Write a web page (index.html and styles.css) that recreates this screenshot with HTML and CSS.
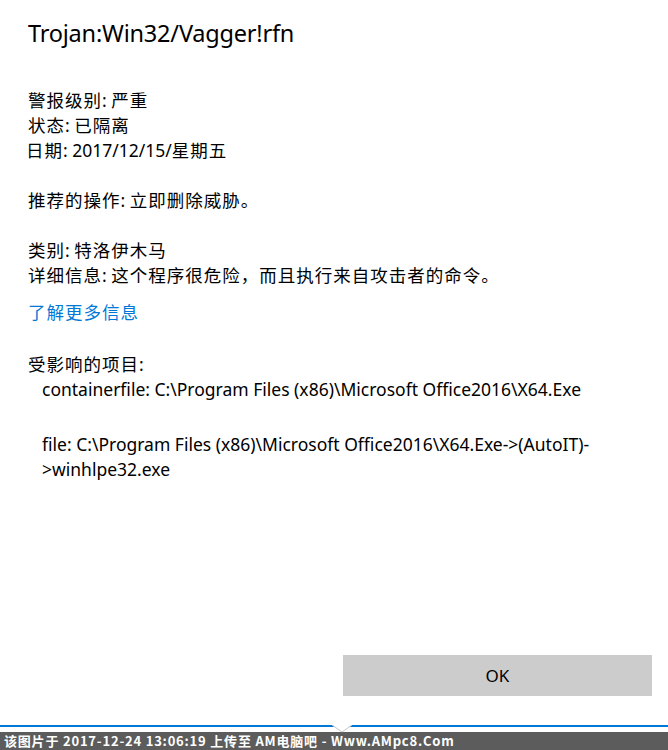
FILE: index.html
```html
<!DOCTYPE html>
<html lang="zh-CN">
<head>
<meta charset="utf-8">
<title>Windows Defender</title>
<link rel="stylesheet" href="styles.css">
</head>
<body>
<div class="page">
  <main class="dialog">
    <h1 class="title">Trojan:Win32/Vagger!rfn</h1>
    <div class="block meta">
      <p class="line"><span class="zh">警报级别</span>: <span class="zh">严重</span></p>
      <p class="line"><span class="zh">状态</span>: <span class="zh">已隔离</span></p>
      <p class="line date"><span class="zh">日期</span>: 2017/12/15/<span class="zh">星期五</span></p>
    </div>
    <p class="line block"><span class="zh">推荐的操作</span>: <span class="zh">立即删除威胁。</span></p>
    <div class="block">
      <p class="line"><span class="zh">类别</span>: <span class="zh">特洛伊木马</span></p>
      <p class="line"><span class="zh">详细信息</span>: <span class="zh">这个程序很危险，而且执行来自攻击者的命令。</span></p>
    </div>
    <a class="line link" href="#"><span class="zh">了解更多信息</span></a>
    <div class="affected">
      <p class="line"><span class="zh">受影响的项目</span>:</p>
      <p class="line item">containerfile: C:\Program Files (x86)\Microsoft Office2016\X64.Exe</p>
      <p class="line item item-gap">file: C:\Program Files (x86)\Microsoft Office2016\X64.Exe-&gt;(AutoIT)-<br>&gt;winhlpe32.exe</p>
    </div>
    <div class="actions">
      <button class="ok" type="button">OK</button>
    </div>
  </main>
  <div class="divider">
    <svg class="chevron" width="20" height="8" viewBox="0 0 20 8" aria-hidden="true">
      <polygon points="0,0 20,0 10,7" fill="#ffffff"/>
      <polyline points="0,0 10,7 20,0" fill="none" stroke="#c8c8c8" stroke-width="1"/>
    </svg>
  </div>
  <footer class="watermark">该图片于 2017-12-24 13:06:19 上传至 AM电脑吧 - Www.AMpc8.Com</footer>
</div>
</body>
</html>
```
FILE: styles.css
```css
html, body {
  margin: 0;
  padding: 0;
  background: #ffffff;
}

.page {
  display: flex;
  flex-direction: column;
  height: 750px;
  overflow: hidden;
  font-family: "Noto Sans", "Noto Sans CJK SC", sans-serif;
  color: #000000;
}

.dialog {
  flex: 1;
  display: flex;
  flex-direction: column;
  padding: 18px 16px 0 28px;
}

.title {
  margin: 0;
  font-size: 23.5px;
  line-height: 30px;
  font-weight: 400;
  letter-spacing: -0.2px;
}

.line {
  margin: 0;
  font-size: 17.5px;
  line-height: 25px;
}

.zh {
  font-family: "Noto Sans CJK SC", sans-serif;
  letter-spacing: 1px;
  line-height: 1;
}

.block {
  margin-top: 25px;
}

.meta {
  margin-top: 40px;
}

.date {
  margin-left: -2px;
}

.link {
  display: block;
  margin-top: 12px;
  color: #0078d7;
  text-decoration: none;
  align-self: flex-start;
}

.affected {
  margin-top: 27px;
}

.item {
  padding-left: 14px;
}

.item-gap {
  margin-top: 30px;
}

.actions {
  margin-top: auto;
  display: flex;
  justify-content: flex-end;
  padding-bottom: 29px;
}

.ok {
  width: 309px;
  height: 41px;
  border: none;
  background: #cccccc;
  font-family: "Noto Sans", sans-serif;
  font-size: 17px;
  color: #000000;
  padding: 0;
}

.divider {
  position: relative;
  height: 2px;
  background: #0078d7;
  margin-bottom: 5px;
}

.chevron {
  position: absolute;
  left: 332px;
  top: 0;
}

.watermark {
  height: 18px;
  background: #5c5c5c;
  color: #ffffff;
  font-family: "Noto Sans CJK SC", sans-serif;
  font-weight: 700;
  font-size: 13px;
  line-height: 18px;
  letter-spacing: 0.8px;
  padding-left: 4px;
  white-space: nowrap;
}
```
